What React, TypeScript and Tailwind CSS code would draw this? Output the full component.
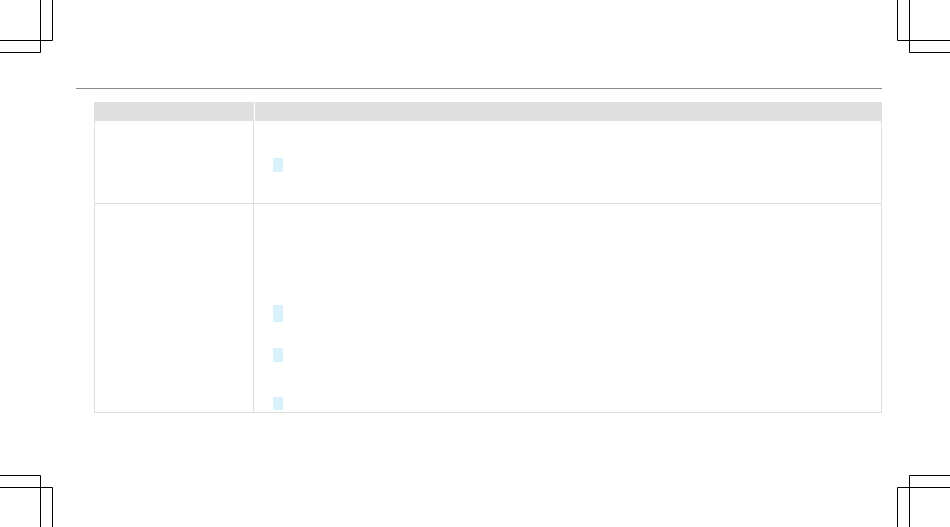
const cropLines: [number, number, number, number][] = [
  // top left
  [40.5, 0, 40.5, 52.5], [0, 52.5, 40.5, 52.5],
  [52.5, 0, 52.5, 40.5], [0, 40.5, 52.5, 40.5],
  // top right
  [897.5, 0, 897.5, 40.5], [897.5, 40.5, 950, 40.5],
  [909.5, 0, 909.5, 52.5], [909.5, 52.5, 950, 52.5],
  // bottom left
  [0, 475.5, 40.5, 475.5], [40.5, 475.5, 40.5, 527],
  [0, 487.5, 52.5, 487.5], [52.5, 487.5, 52.5, 527],
  // bottom right
  [909.5, 475.5, 950, 475.5], [909.5, 475.5, 909.5, 527],
  [897.5, 487.5, 950, 487.5], [897.5, 487.5, 897.5, 527],
];

function CropMarks() {
  return (
    <svg className="absolute inset-0 pointer-events-none" width={950} height={527}>
      {cropLines.map(([x1, y1, x2, y2], i) => (
        <line key={i} x1={x1} y1={y1} x2={x2} y2={y2} stroke="#000" strokeWidth={1} />
      ))}
    </svg>
  );
}

function Marker({ h }: { h: string }) {
  return <div className={`w-[10px] bg-[#d9f1fa] ${h}`} />;
}

export default function App() {
  return (
    <div className="relative w-[950px] h-[527px] bg-white overflow-hidden" style={{ fontFamily: '"Liberation Sans", Arial, sans-serif' }}>
      <CropMarks />

      <div className="pt-[88px] pl-[76px]">
        <div className="w-[806px] h-px bg-[#8a8a8a]" />

        <div className="ml-[18px] mt-[13px] w-[788px] border border-[#dedede] border-t-0">
          {/* header */}
          <div className="grid grid-cols-[159px_1fr] gap-x-px h-[19px] bg-white">
            <div className="bg-[#dfdfdf]" />
            <div className="bg-[#dfdfdf]" />
          </div>

          {/* row 1 */}
          <div className="grid grid-cols-[159px_1fr] h-[83px] border-b border-[#dedede]">
            <div className="border-r border-[#dedede]" />
            <div className="pl-[19px] pt-[37px]">
              <Marker h="h-[14px]" />
            </div>
          </div>

          {/* row 2 */}
          <div className="grid grid-cols-[159px_1fr] h-[208px]">
            <div className="border-r border-[#dedede]" />
            <div className="pl-[19px] pt-[101px] flex flex-col">
              <Marker h="h-[17px]" />
              <div className="mt-[26px]">
                <Marker h="h-[14px]" />
              </div>
              <div className="mt-[35px]">
                <Marker h="h-[13px]" />
              </div>
            </div>
          </div>
        </div>
      </div>
    </div>
  );
}
